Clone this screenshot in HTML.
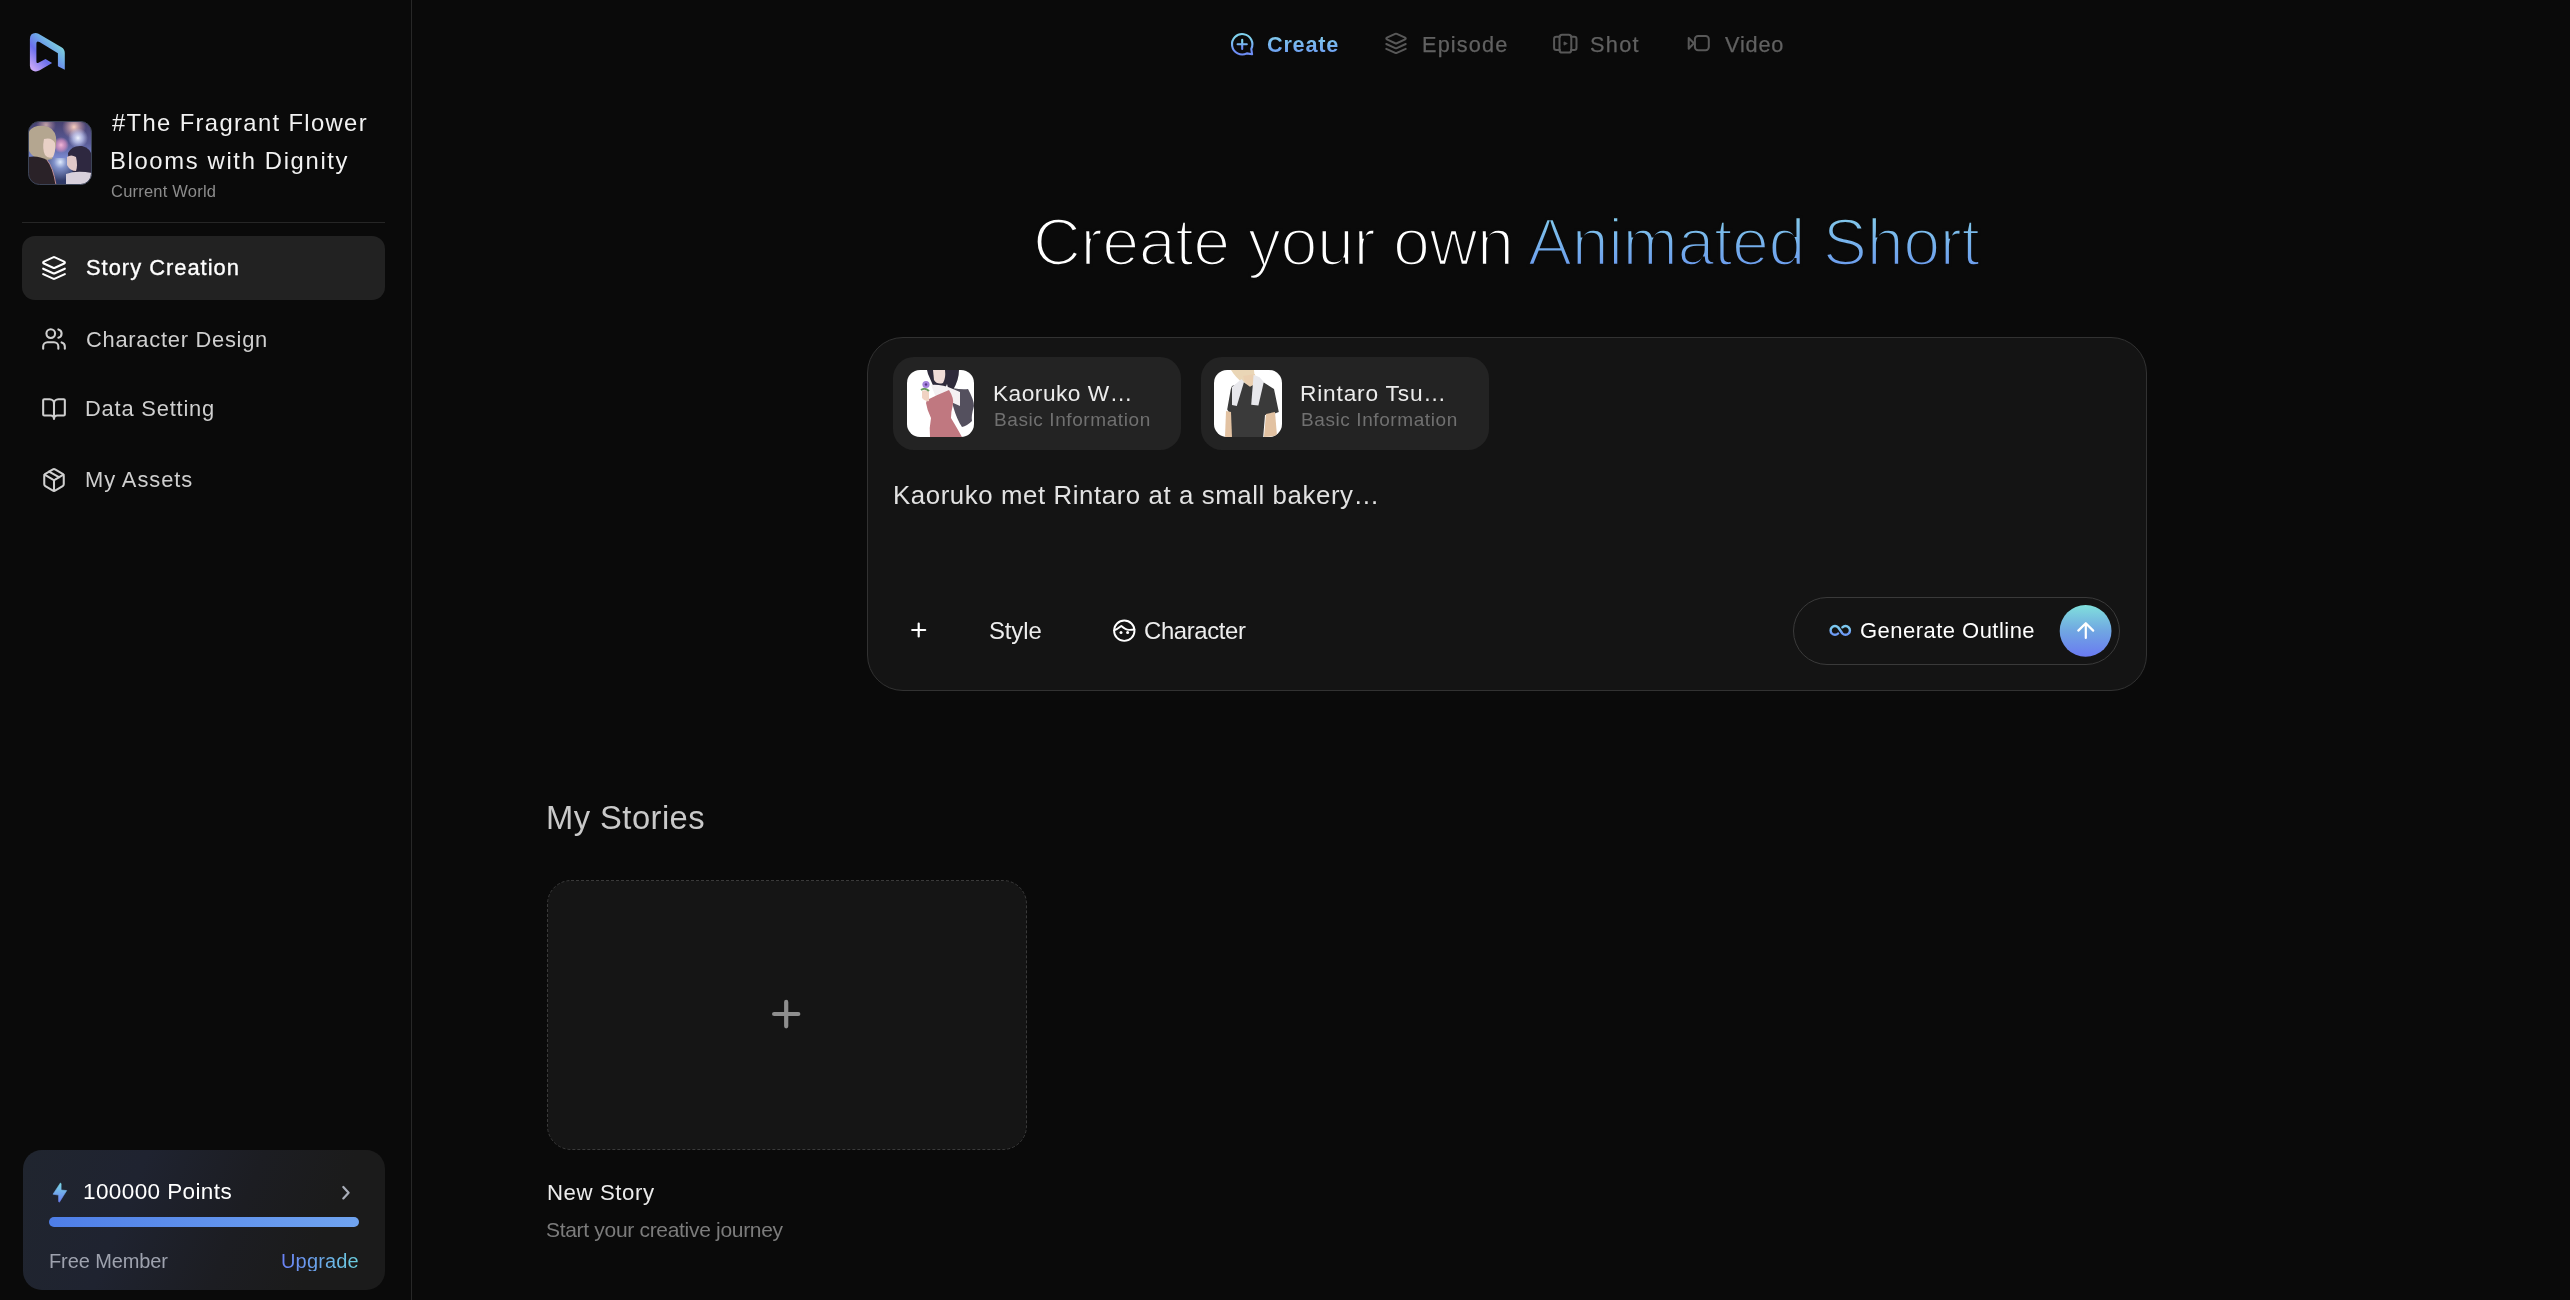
<!DOCTYPE html>
<html>
<head>
<meta charset="utf-8">
<style>
*{margin:0;padding:0;box-sizing:border-box;}
html,body{width:2570px;height:1300px;overflow:hidden;background:#0a0a0a;}
body{position:relative;font-family:"Liberation Sans",sans-serif;color:#fff;}
.a{position:absolute;}
.t{position:absolute;white-space:nowrap;will-change:transform;}
.grad{background:linear-gradient(180deg,#84cdea 10%,#6a98ee 90%);-webkit-background-clip:text;background-clip:text;color:transparent;}
svg{position:absolute;overflow:visible;}
.ln{fill:none;stroke-linecap:round;stroke-linejoin:round;}
</style>
</head>
<body>

<!-- SIDEBAR -->
<div class="a" style="left:411px;top:0;width:1px;height:1300px;background:#282828;"></div>

<!-- logo -->
<svg style="left:24px;top:28px" width="48" height="48" viewBox="0 0 48 48">
  <defs>
    <linearGradient id="lg" x1="0.1" y1="0.95" x2="0.9" y2="0.1">
      <stop offset="0" stop-color="#c8a6f8"/>
      <stop offset="0.35" stop-color="#6c70ee"/>
      <stop offset="0.62" stop-color="#6fa8e8"/>
      <stop offset="1" stop-color="#88ead4"/>
    </linearGradient>
  </defs>
  <path fill="url(#lg)" d="M5.9 38 L5.9 11 Q5.9 5 11.5 5 Q13 5 14.5 5.8 L37.5 19.3 Q40.8 21.3 40.8 25 L40.8 41.7 L33.9 38.2 L33.9 25.2 L15.5 14 Q12.4 12.5 12.4 15.5 L12.4 33.5 Q12.4 35.8 14.5 34.8 L21.5 31 L28.1 35 L15.8 42.3 Q12 44.5 8.5 42.5 Q5.9 41 5.9 38 Z"/>
</svg>

<!-- world avatar -->
<svg style="left:28px;top:121px" width="64" height="64" viewBox="0 0 64 64">
  <defs>
    <clipPath id="wc"><rect x="0.5" y="0.5" width="63" height="63" rx="11"/></clipPath>
    <linearGradient id="sky" x1="0" y1="0" x2="0" y2="1">
      <stop offset="0" stop-color="#45406e"/>
      <stop offset="0.35" stop-color="#5a5c98"/>
      <stop offset="0.58" stop-color="#7a8ad0"/>
      <stop offset="0.6" stop-color="#3a4478"/>
      <stop offset="1" stop-color="#2a3058"/>
    </linearGradient>
    <radialGradient id="fw1"><stop offset="0" stop-color="#f4b8d8"/><stop offset="0.6" stop-color="#d890c0" stop-opacity="0.7"/><stop offset="1" stop-color="#d890c0" stop-opacity="0"/></radialGradient>
    <radialGradient id="fw2"><stop offset="0" stop-color="#f0f4ff"/><stop offset="0.5" stop-color="#c8d0f8" stop-opacity="0.7"/><stop offset="1" stop-color="#c0c8f0" stop-opacity="0"/></radialGradient>
    <radialGradient id="fw3"><stop offset="0" stop-color="#f8d0c0"/><stop offset="1" stop-color="#e8a8b0" stop-opacity="0"/></radialGradient>
    <radialGradient id="sea" cx="0.55" cy="0.15" r="0.7"><stop offset="0" stop-color="#e0ecff"/><stop offset="0.35" stop-color="#8090c8"/><stop offset="1" stop-color="#303a68"/></radialGradient>
  </defs>
  <g clip-path="url(#wc)">
    <rect width="64" height="64" fill="url(#sky)"/>
    <circle cx="46" cy="6" r="12" fill="url(#fw3)"/>
    <circle cx="18" cy="4" r="10" fill="url(#fw3)" opacity="0.7"/>
    <circle cx="33" cy="24" r="8" fill="url(#fw1)"/>
    <circle cx="50" cy="17" r="10" fill="url(#fw2)"/>
    <rect x="18" y="37" width="26" height="27" fill="url(#sea)"/>
    <path d="M1 10 Q6 4 16 5 Q26 6 28 16 Q29 24 26 32 L24 38 L14 40 Q4 36 1 30 Z" fill="#b4a690"/>
    <path d="M16 18 Q24 16 27 22 Q28 30 25 36 Q20 38 17 34 Q14 28 16 18 Z" fill="#e8d0c6"/>
    <path d="M0 36 Q10 34 19 39 Q25 46 28 64 L0 64 Z" fill="#2a2228"/>
    <path d="M19 39 Q25 46 28 64" stroke="#e0a0a0" stroke-width="1" fill="none" opacity="0.8"/>
    <path d="M40 32 Q44 24 54 25 Q63 27 64 36 L64 56 L46 52 Q40 44 40 32 Z" fill="#2e2840"/>
    <path d="M39 36 Q43 33 48 36 Q50 44 48 50 Q42 50 39 44 Z" fill="#e0c8c8"/>
    <path d="M38 53 Q48 49 64 52 L64 64 L38 64 Z" fill="#d8d0dc"/>
  </g>
  <rect x="0.5" y="0.5" width="63" height="63" rx="11" fill="none" stroke="#3c4456" stroke-width="1"/>
</svg>

<div class="a" style="left:22px;top:222px;width:363px;height:1px;background:#262626;"></div>

<!-- nav -->
<div class="a" style="left:22px;top:236px;width:363px;height:64px;border-radius:13px;background:#222222;"></div>

<svg style="left:41px;top:254.7px" width="26" height="26" viewBox="0 0 24 24">
  <g class="ln" stroke="#ffffff" stroke-width="1.95">
    <path d="m12.83 2.18a2 2 0 0 0-1.66 0L2.6 6.08a1 1 0 0 0 0 1.83l8.58 3.91a2 2 0 0 0 1.66 0l8.58-3.9a1 1 0 0 0 0-1.83Z"/>
    <path d="m22 17.65-9.17 4.16a2 2 0 0 1-1.66 0L2 17.65"/>
    <path d="m22 12.65-9.17 4.16a2 2 0 0 1-1.66 0L2 12.65"/>
  </g>
</svg>
<svg style="left:41px;top:325.7px" width="26" height="26" viewBox="0 0 24 24">
  <g class="ln" stroke="#cfcfcf" stroke-width="1.9">
    <path d="M16 21v-2a4 4 0 0 0-4-4H6a4 4 0 0 0-4 4v2"/>
    <circle cx="9" cy="7" r="4"/>
    <path d="M22 21v-2a4 4 0 0 0-3-3.87"/>
    <path d="M16 3.13a4 4 0 0 1 0 7.75"/>
  </g>
</svg>
<svg style="left:41px;top:395.8px" width="26" height="26" viewBox="0 0 24 24">
  <g class="ln" stroke="#cfcfcf" stroke-width="1.9">
    <path d="M12 7v14"/>
    <path d="M3 18a1 1 0 0 1-1-1V4a1 1 0 0 1 1-1h5a4 4 0 0 1 4 4 4 4 0 0 1 4-4h5a1 1 0 0 1 1 1v13a1 1 0 0 1-1 1h-6a3 3 0 0 0-3 3 3 3 0 0 0-3-3z"/>
  </g>
</svg>
<svg style="left:41px;top:466.6px" width="26" height="26" viewBox="0 0 24 24">
  <g class="ln" stroke="#cfcfcf" stroke-width="1.9">
    <path d="M11 21.73a2 2 0 0 0 2 0l7-4A2 2 0 0 0 21 16V8a2 2 0 0 0-1-1.73l-7-4a2 2 0 0 0-2 0l-7 4A2 2 0 0 0 3 8v8a2 2 0 0 0 1 1.73z"/>
    <path d="M12 22V12"/>
    <path d="m3.3 7 7.703 4.734a2 2 0 0 0 1.994 0L20.7 7"/>
    <path d="m7.5 4.27 9 5.15"/>
  </g>
</svg>

<!-- points card -->
<div class="a" style="left:23px;top:1150px;width:362px;height:140px;border-radius:19px;background:linear-gradient(112deg,#20252f 0%,#1f2330 30%,#1c1d22 58%,#1b1b1b 80%);"></div>
<svg style="left:44px;top:1174px" width="32" height="32" viewBox="0 0 32 32">
  <defs><linearGradient id="bolt" x1="0" y1="0" x2="0" y2="1"><stop offset="0" stop-color="#7ad8e4"/><stop offset="1" stop-color="#6a7ef2"/></linearGradient></defs>
  <path fill="url(#bolt)" stroke="url(#bolt)" stroke-width="0.6" stroke-linejoin="round" d="M16.4 9 L17.1 9.6 L17.1 16 L22.7 16.6 L15.4 28.2 L14.6 27.6 L14.6 21.1 L9 20.2 Z"/>
</svg>
<svg style="left:330px;top:1176px" width="32" height="32" viewBox="0 0 32 32">
  <path class="ln" stroke="#a9aeb9" stroke-width="2.2" d="M13.3 11 L18.6 16.7 L13.3 22.4"/>
</svg>
<div class="a" style="left:49px;top:1217px;width:310px;height:10px;border-radius:5px;background:linear-gradient(90deg,#4e7ee8,#70a4f0);"></div>

<!-- TOP NAV ICONS -->
<svg style="left:1224px;top:26px" width="36" height="36" viewBox="0 0 36 36">
  <defs><linearGradient id="cg" x1="0" y1="0" x2="0" y2="1"><stop offset="0.2" stop-color="#80d2ee"/><stop offset="0.85" stop-color="#6e8ef6"/></linearGradient></defs>
  <g class="ln" stroke="url(#cg)" stroke-width="2.1">
    <path d="M22.85 27.37 A10.2 10.2 0 1 1 27.27 22.95 L28.1 28.3 Z"/>
    <path d="M13.6 18.3 H22.8 M18.2 13.7 V22.9"/>
  </g>
</svg>
<svg style="left:1378px;top:26px" width="36" height="36" viewBox="0 0 36 36">
  <g transform="translate(6.36 5.75) scale(0.97)" class="ln" stroke="#585858" stroke-width="2.1">
    <path d="m12.83 2.18a2 2 0 0 0-1.66 0L2.6 6.08a1 1 0 0 0 0 1.83l8.58 3.91a2 2 0 0 0 1.66 0l8.58-3.9a1 1 0 0 0 0-1.83Z"/>
    <path d="m22 17.65-9.17 4.16a2 2 0 0 1-1.66 0L2 17.65"/>
    <path d="m22 12.65-9.17 4.16a2 2 0 0 1-1.66 0L2 12.65"/>
  </g>
</svg>
<svg style="left:1547px;top:26px" width="36" height="36" viewBox="0 0 36 36">
  <g class="ln" stroke="#585858" stroke-width="2">
    <rect x="12.5" y="8.8" width="11.8" height="17.7" rx="2.6"/>
    <path d="M12.9 10.7 H9.3 Q7.1 10.7 7.1 12.9 V21.8 Q7.1 24 9.3 24 H12.9"/>
    <path d="M24 10.7 H27.3 Q29.5 10.7 29.5 12.9 V21.8 Q29.5 24 27.3 24 H24"/>
  </g>
  <path d="M17 15.9 L17 19.1 L20.3 17.5 Z" fill="#585858" stroke="#585858" stroke-width="0.8" stroke-linejoin="round"/>
</svg>
<svg style="left:1680px;top:26px" width="36" height="36" viewBox="0 0 36 36">
  <g class="ln" stroke="#585858" stroke-width="2">
    <rect x="14.9" y="10.1" width="13.9" height="14.1" rx="3.2"/>
    <path d="M13.9 17.3 L8.7 12 V22.8 Z"/>
  </g>
</svg>

<!-- INPUT CARD -->
<div class="a" style="left:867px;top:337px;width:1280px;height:354px;border-radius:36px;background:#141414;border:1px solid #323232;"></div>
<div class="a" style="left:893px;top:357px;width:288px;height:93px;border-radius:21px;background:#232323;"></div>
<div class="a" style="left:1201px;top:357px;width:288px;height:93px;border-radius:21px;background:#232323;"></div>

<!-- Kaoruko avatar -->
<svg style="left:907px;top:370px" width="67" height="67" viewBox="0 0 67 67">
  <defs><clipPath id="k1c"><rect width="67" height="67" rx="13"/></clipPath></defs>
  <g clip-path="url(#k1c)">
    <rect width="67" height="67" fill="#ffffff"/>
    <path d="M45 18 Q56 20 61 19 Q67 30 67 36 Q64 46 65 51 Q60 56 55 57 Q50 50 46 36 Z" fill="#2e2a3a" opacity="0.82"/>
    <path d="M20 0 L52 0 Q52 10 46 20 L44 30 L40 14 L33 31 Q28 20 21 4 Z" fill="#2e2a3a"/>
    <path d="M26 0 L38 0 Q39 8 36 13 Q30 15 27 10 Z" fill="#f0dcd8"/>
    <path d="M24 15 Q34 14 46 19 L53 22 L53 36 L44 32 L30 30 Z" fill="#f4f0f2"/>
    <path d="M20 30 Q32 24 42 20 Q47 28 46 34 Q44 42 44 48 Q50 58 55 67 L23 67 Q22 58 24 48 Q20 40 19 33 Z" fill="#c07880"/>
    <path d="M15 21 Q19 19 22 22 L22 31 Q18 32 15 28 Z" fill="#f0d2c2"/>
    <path d="M14 20 Q18 17 22 21" stroke="#6a9a60" stroke-width="2" fill="none"/>
    <circle cx="19" cy="14.5" r="3.6" fill="#a482dc"/>
    <circle cx="19" cy="14.5" r="1.2" fill="#5a3a8a"/>
  </g>
</svg>
<!-- Rintaro avatar -->
<svg style="left:1214px;top:370px" width="68" height="67" viewBox="0 0 68 67">
  <defs><clipPath id="k2c"><rect width="68" height="67" rx="13"/></clipPath></defs>
  <g clip-path="url(#k2c)">
    <rect width="68" height="67" fill="#ffffff"/>
    <path d="M17 0 L40 0 Q41 6 40 10 L29 13 Q22 8 17 0 Z" fill="#ead6b6"/>
    <path d="M29 6 L41 4 L42 16 L33 18 Z" fill="#eacfb0"/>
    <path d="M18 16 L29.4 12 L36 16.8 L41.4 13.8 L49.8 12.6 L60 19 L64.8 42 L60 43.8 L51 45 L49.2 67 L16.8 67 L15.6 43.2 L13.2 39.6 L16.8 19.2 Z" fill="#3a3a3a"/>
    <path d="M18 17 L27.6 9 L30 12 L22.8 36 L18 35 Z" fill="#e8e8ec"/>
    <path d="M39.6 4.8 L45.6 7.2 L49.8 12 L44.4 35.4 L37.2 34.8 Z" fill="#e8e8ec"/>
    <path d="M12 41 L17 42 L18 67 L11 67 Z" fill="#e2c2a2"/>
    <path d="M52 44 L61 42 L63 66 L50 67 Z" fill="#e2c2a2"/>
  </g>
</svg>

<!-- style row icons -->
<svg style="left:900px;top:612px" width="36" height="36" viewBox="0 0 36 36">
  <path class="ln" stroke="#ffffff" stroke-width="2.2" d="M12.2 18 H25.2 M18.7 11.6 V24.4"/>
</svg>
<svg style="left:1106px;top:613px" width="36" height="36" viewBox="0 0 36 36">
  <g class="ln" stroke="#ffffff" stroke-width="1.9">
    <circle cx="18.3" cy="17.7" r="10.2"/>
    <path d="M8.2 17.3 C11 16.6 13.4 14.2 15.2 12.9 C17 14.5 19.5 16.8 23 16.9 C25 17 26.6 16.8 28.4 16.5"/>
  </g>
  <circle cx="15" cy="19.6" r="1.5" fill="#fff"/>
  <circle cx="21.6" cy="19.6" r="1.5" fill="#fff"/>
</svg>

<div class="a" style="left:1793px;top:597px;width:327px;height:68px;border-radius:34px;border:1px solid #3a3a3a;"></div>
<svg style="left:1822px;top:612px" width="36" height="36" viewBox="0 0 36 36">
  <defs><linearGradient id="ig" x1="0" y1="0" x2="0" y2="1"><stop offset="0.3" stop-color="#7cc8f0"/><stop offset="0.75" stop-color="#6e9cf6"/></linearGradient></defs>
  <path class="ln" stroke="url(#ig)" stroke-width="2.4" d="M16.1 21.5 A4.4 4.4 0 1 1 16.1 15.3 L20.4 21.5 A4.4 4.4 0 1 0 20.4 15.3"/>
</svg>
<svg style="left:2058px;top:603px" width="56" height="56" viewBox="0 0 56 56">
  <defs><linearGradient id="ag" x1="0" y1="0" x2="0" y2="1"><stop offset="0" stop-color="#80e0dc"/><stop offset="0.5" stop-color="#70a6e2"/><stop offset="1" stop-color="#6a7af2"/></linearGradient></defs>
  <circle cx="27.6" cy="27.9" r="25.9" fill="url(#ag)"/>
  <path class="ln" stroke="#ffffff" stroke-width="2.2" d="M27.8 35 V20.6 M20.3 27.6 L27.8 20.2 L35.2 27.6"/>
</svg>

<!-- MY STORIES card -->
<svg style="left:547px;top:880px" width="480" height="270" viewBox="0 0 480 270">
  <rect x="0.5" y="0.5" width="479" height="269" rx="23.5" fill="#151515" stroke="#3a3a3a" stroke-width="1" stroke-dasharray="3 2"/>
</svg>
<svg style="left:760px;top:990px" width="52" height="52" viewBox="0 0 52 52">
  <path class="ln" stroke="#8e8e8e" stroke-width="4.2" d="M14.1 24 H38.3 M26.2 11.9 V36.3"/>
</svg>

<div class="t" style="left:111.7px;top:110.65px;font-size:23.8px;line-height:23.8px;letter-spacing:1.36px;color:#f2f2f2;">#The Fragrant Flower</div>
<div class="t" style="left:110.3px;top:149.45px;font-size:23.8px;line-height:23.8px;letter-spacing:1.66px;color:#f2f2f2;">Blooms with Dignity</div>
<div class="t" style="left:110.7px;top:182.83px;font-size:16.5px;line-height:16.5px;letter-spacing:0.22px;color:#8c8c8c;">Current World</div>
<div class="t" style="left:85.7px;top:257.46px;font-size:21.9px;line-height:21.9px;letter-spacing:1.0px;color:#ffffff;-webkit-text-stroke:0.35px #fff;">Story Creation</div>
<div class="t" style="left:85.7px;top:328.56px;font-size:21.9px;line-height:21.9px;letter-spacing:0.73px;color:#cfcfcf;">Character Design</div>
<div class="t" style="left:85.2px;top:398.46px;font-size:21.9px;line-height:21.9px;letter-spacing:0.8px;color:#cfcfcf;">Data Setting</div>
<div class="t" style="left:85.2px;top:469.16px;font-size:21.9px;line-height:21.9px;letter-spacing:0.94px;color:#cfcfcf;">My Assets</div>
<div class="t" style="left:83.4px;top:1181.15px;font-size:22.5px;line-height:22.5px;letter-spacing:0.4px;color:#ffffff;">100000 Points</div>
<div class="t" style="left:48.5px;top:1251.07px;font-size:20px;line-height:20px;letter-spacing:-0.1px;color:#9ea2ae;">Free Member</div>
<div class="t" style="left:281px;top:1251.07px;font-size:20px;line-height:20px;letter-spacing:0.17px;color:transparent;background:linear-gradient(90deg,#6a80f6,#6cd0de);-webkit-background-clip:text;background-clip:text;">Upgrade</div>
<div class="t" style="left:1267.3px;top:33.93px;font-size:21.7px;line-height:21.7px;letter-spacing:0.74px;color:transparent;font-weight:bold;background:linear-gradient(180deg,#84d0ec,#6a98f2);-webkit-background-clip:text;background-clip:text;">Create</div>
<div class="t" style="left:1422px;top:33.63px;font-size:21.7px;line-height:21.7px;letter-spacing:1.17px;color:#616161;-webkit-text-stroke:0.25px #616161;">Episode</div>
<div class="t" style="left:1590px;top:33.63px;font-size:21.7px;line-height:21.7px;letter-spacing:1.33px;color:#616161;-webkit-text-stroke:0.25px #616161;">Shot</div>
<div class="t" style="left:1724.7px;top:33.63px;font-size:21.7px;line-height:21.7px;letter-spacing:0.82px;color:#616161;-webkit-text-stroke:0.25px #616161;">Video</div>
<div class="t" style="left:1033px;top:209.01px;font-size:66.5px;line-height:66.5px;letter-spacing:-0.49px;color:#ffffff;">Create your own <span class="grad">Animated Short</span></div>
<div class="t" style="left:1033px;top:209.01px;font-size:66.5px;line-height:66.5px;letter-spacing:-0.49px;color:transparent;-webkit-text-stroke:2.6px #0a0a0a;">Create your own Animated Short</div>
<div class="t" style="left:992.5px;top:381.78px;font-size:22.7px;line-height:22.7px;letter-spacing:0.49px;color:#ececec;">Kaoruko W…</div>
<div class="t" style="left:993.8px;top:410.02px;font-size:19px;line-height:19px;letter-spacing:0.59px;color:#707070;">Basic Information</div>
<div class="t" style="left:1299.7px;top:381.78px;font-size:22.7px;line-height:22.7px;letter-spacing:0.82px;color:#ececec;">Rintaro Tsu…</div>
<div class="t" style="left:1300.7px;top:410.02px;font-size:19px;line-height:19px;letter-spacing:0.59px;color:#707070;">Basic Information</div>
<div class="t" style="left:893.3px;top:482.56px;font-size:25.8px;line-height:25.8px;letter-spacing:0.59px;color:#e2e2e2;">Kaoruko met Rintaro at a small bakery…</div>
<div class="t" style="left:989.2px;top:618.97px;font-size:23.9px;line-height:23.9px;letter-spacing:-0.1px;color:#ededed;">Style</div>
<div class="t" style="left:1143.5px;top:618.97px;font-size:23.9px;line-height:23.9px;letter-spacing:-0.37px;color:#ededed;">Character</div>
<div class="t" style="left:1859.6px;top:620.38px;font-size:22px;line-height:22px;letter-spacing:0.47px;color:#ffffff;">Generate Outline</div>
<div class="t" style="left:546.4px;top:801.62px;font-size:32.7px;line-height:32.7px;letter-spacing:0.47px;color:#c9c9c9;">My Stories</div>
<div class="t" style="left:546.85px;top:1182.31px;font-size:22.2px;line-height:22.2px;letter-spacing:0.59px;color:#ececec;">New Story</div>
<div class="t" style="left:546px;top:1219.42px;font-size:21px;line-height:21px;letter-spacing:-0.31px;color:#7c7c7c;">Start your creative journey</div>

</body>
</html>
